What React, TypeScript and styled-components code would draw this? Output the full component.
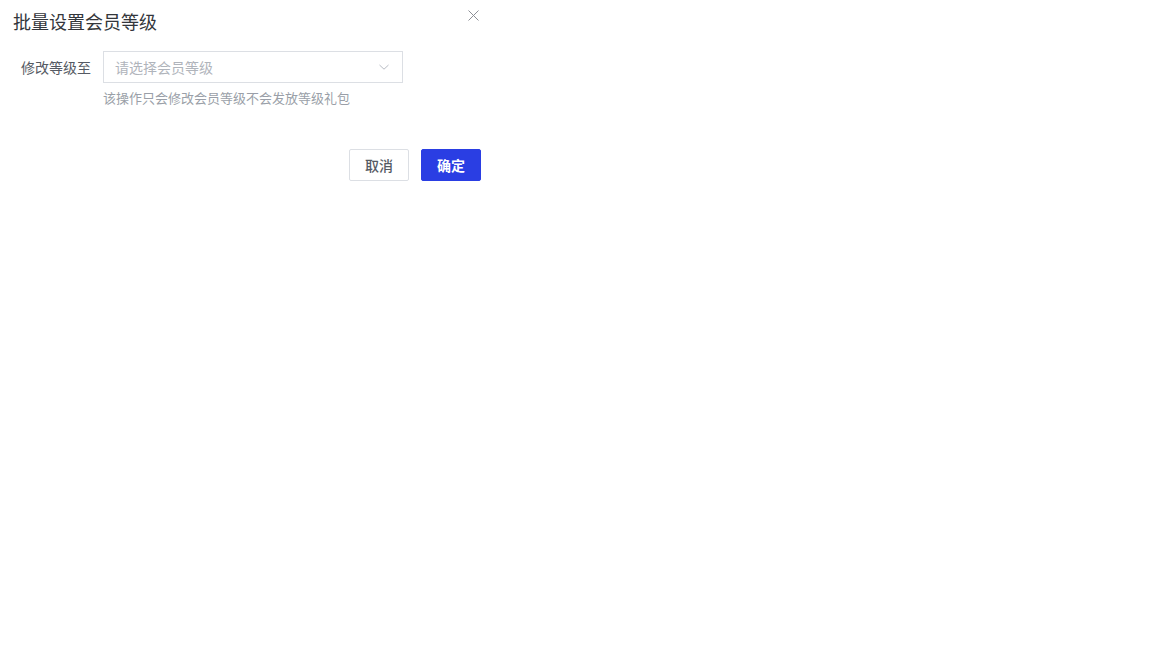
import React from 'react';
import styled, { createGlobalStyle } from 'styled-components';

const GlobalStyle = createGlobalStyle`
    body {
        margin: 0;
        background: #fff;
        font-family: "Noto Sans CJK SC", "Liberation Sans", sans-serif;
    }
`;

const ChevronDown: React.FC = () => (
    <svg width="12" height="12" viewBox="0 0 12 12" fill="none">
        <path d="M1.5 4L6 8.2L10.5 4" stroke="#b8bcc4" strokeWidth="1" />
    </svg>
);

const CloseIcon: React.FC = () => (
    <svg width="11" height="11" viewBox="0 0 11 11" fill="none">
        <path d="M0.5 0.5L10.5 10.5M10.5 0.5L0.5 10.5" stroke="#8c8f96" strokeWidth="1" />
    </svg>
);

export default function App() {
    return (
        <>
            <GlobalStyle />
            <Dialog>
                <Header>
                    <Title>批量设置会员等级</Title>
                    <CloseButton aria-label="close">
                        <CloseIcon />
                    </CloseButton>
                </Header>
                <Body>
                    <FormRow>
                        <Label>修改等级至</Label>
                        <Field>
                            <Select>
                                <Placeholder>请选择会员等级</Placeholder>
                                <ChevronDown />
                            </Select>
                            <Hint>该操作只会修改会员等级不会发放等级礼包</Hint>
                        </Field>
                    </FormRow>
                </Body>
                <Footer>
                    <Button>取消</Button>
                    <Button primary>确定</Button>
                </Footer>
            </Dialog>
        </>
    );
}

const Dialog = styled.div`
    width: 494px;
    box-sizing: border-box;
    padding: 0 13px 0 13px;
`;

const Header = styled.div`
    display: flex;
    align-items: center;
    justify-content: space-between;
    height: 42px;
`;

const Title = styled.div`
    font-size: 18px;
    color: #33363b;
    line-height: 26px;
    margin-top: -1px;
`;

const CloseButton = styled.button`
    display: flex;
    align-items: center;
    justify-content: center;
    background: none;
    border: none;
    padding: 0;
    margin: 10px 2px 0 0;
    align-self: flex-start;
    cursor: pointer;
`;

const Body = styled.div`
    padding: 9px 0 0 8px;
`;

const FormRow = styled.div`
    display: flex;
    align-items: flex-start;
    gap: 12px;
`;

const Label = styled.div`
    font-size: 14px;
    color: #555a63;
    line-height: 32px;
    width: 70px;
    text-align: right;
`;

const Field = styled.div`
    display: flex;
    flex-direction: column;
`;

const Select = styled.div`
    width: 300px;
    height: 32px;
    box-sizing: border-box;
    border: 1px solid #dcdfe4;
    display: flex;
    align-items: center;
    justify-content: space-between;
    padding: 0 12px 0 11px;
`;

const Placeholder = styled.span`
    font-size: 14px;
    color: #b0b4bb;
`;

const Hint = styled.div`
    font-size: 13px;
    color: #9a9fa8;
    line-height: 18px;
    margin-top: 6px;
`;

const Footer = styled.div`
    display: flex;
    justify-content: flex-end;
    gap: 12px;
    margin-top: 42px;
`;

const Button = styled.button<{ primary?: boolean }>`
    width: 60px;
    height: 32px;
    box-sizing: border-box;
    font-family: inherit;
    font-size: 14px;
    border-radius: 2px;
    cursor: pointer;
    padding: 0;
    border: 1px solid ${p => (p.primary ? '#2a3ee3' : '#dcdfe4')};
    background: ${p => (p.primary ? '#2a3ee3' : '#fff')};
    color: ${p => (p.primary ? '#fff' : '#555a63')};
    font-weight: ${p => (p.primary ? 700 : 500)};
`;
